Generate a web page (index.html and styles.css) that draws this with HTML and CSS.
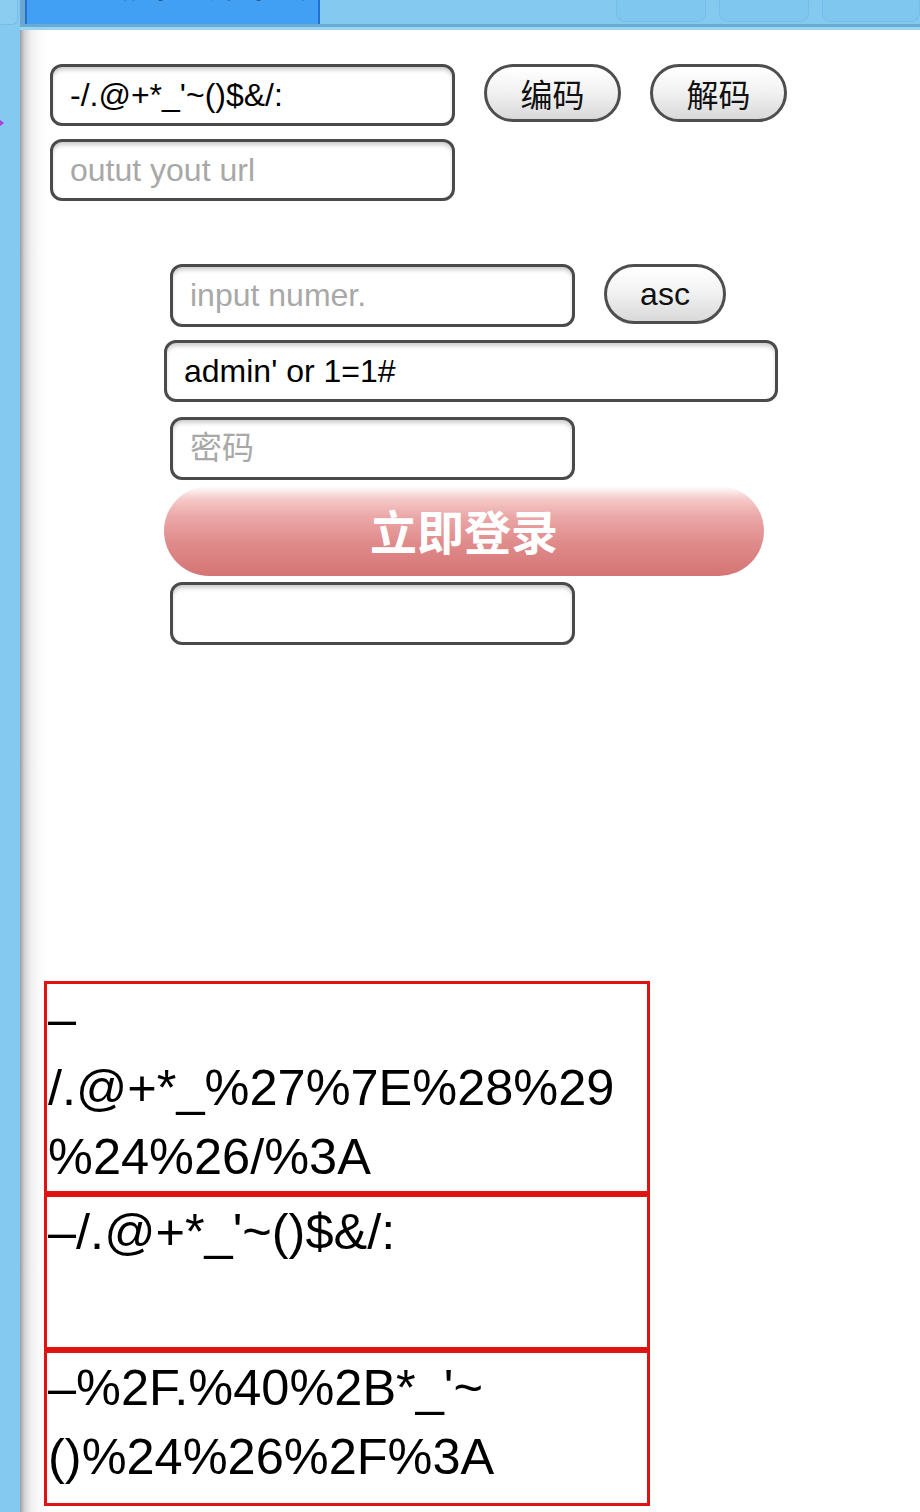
FILE: index.html
```html
<!DOCTYPE html>
<html lang="zh-CN">
<head>
<meta charset="utf-8">
<title>URL 编码 / 解码</title>
<link rel="stylesheet" href="styles.css">
</head>
<body>
<div class="app">
  <aside class="sidebar">
    <div class="sb-cap"></div>
    <div class="sb-mark"></div>
  </aside>
  <div class="main">
    <div class="tabbar">
      <div class="tab-gap"></div>
      <div class="tab active"><span class="tab-label">URL 编码 / 解码工具 ·</span></div>
      <div class="tab-spacer"></div>
      <div class="tab"></div>
      <div class="tab"></div>
      <div class="tab last"></div>
    </div>
    <div class="content">
      <section class="coder">
        <div class="row">
          <input class="field" type="text" value="-/.@+*_'~()$&amp;/:">
          <button class="pill" type="button">编码</button>
          <button class="pill" type="button">解码</button>
        </div>
        <div class="row second">
          <input class="field" type="text" placeholder="outut yout url">
        </div>
      </section>
      <section class="login">
        <div class="row narrow">
          <input class="field tall" type="text" placeholder="input numer.">
          <button class="pill asc" type="button">asc</button>
        </div>
        <input class="field tall wide" type="text" value="admin' or 1=1#">
        <input class="field tall narrow pw" type="password" placeholder="密码">
        <button class="submit" type="button">立即登录</button>
        <input class="field tall narrow last-field" type="text">
      </section>
      <section class="outputs">
        <div class="out">–<br>/.@+*_%27%7E%28%29<br>%24%26/%3A</div>
        <div class="out">–/.@+*_'~()$&amp;/:</div>
        <div class="out">–%2F.%40%2B*_'~<br>()%24%26%2F%3A</div>
      </section>
    </div>
  </div>
</div>
</body>
</html>
```
FILE: styles.css
```css
* { box-sizing: border-box; }

html, body {
  margin: 0;
  padding: 0;
}

body {
  background: #83c9f0;
  font-family: "Liberation Sans", "Noto Sans CJK SC", sans-serif;
  color: #000;
}

.app {
  display: flex;
  min-height: 1512px;
}

.sidebar {
  width: 20px;
  flex: none;
  display: flex;
  flex-direction: column;
  background: #83c9f0;
}

.sb-cap {
  width: 18px;
  height: 25px;
  background: #8acdf1;
  border-right: 1px solid #79bde4;
  border-bottom: 1px solid #79bde4;
  border-bottom-right-radius: 6px;
}

.sb-mark {
  margin-top: 95px;
  width: 0;
  height: 0;
  border-top: 3px solid transparent;
  border-bottom: 3px solid transparent;
  border-left: 4px solid #b23ad8;
}

.main {
  flex: 1;
  display: flex;
  flex-direction: column;
  min-width: 0;
}

.tabbar {
  height: 30px;
  display: flex;
  align-items: flex-start;
  background: #83c9f0;
  border-bottom: 3px solid #9ad4f3;
  box-shadow: inset 0 -3px 0 #6aabd4;
  overflow: hidden;
}

.tab-gap {
  width: 5px;
  height: 24px;
  background: #6aa6cf;
}

.tab {
  height: 22px;
  width: 92px;
  margin-right: 13px;
  border: 1px solid #74bde8;
  border-top: none;
  border-radius: 0 0 9px 9px;
  background: #80c7ef;
}

.tab.last {
  width: 100px;
  margin-right: 0;
}

.tab.active {
  width: 301px;
  height: 24px;
  margin-right: 0;
  background: #42a0f4;
  border: none;
  border-left: 2px solid #2470cf;
  border-right: 2px solid #2470cf;
  border-radius: 0;
  overflow: hidden;
  padding-left: 8px;
}

.tab-label {
  display: block;
  margin-top: -24px;
  font-size: 24px;
  line-height: 28px;
  color: #0f2340;
  white-space: nowrap;
  letter-spacing: 6px;
}

.tab-spacer {
  width: 296px;
  flex: none;
}

.content {
  flex: 1;
  background: linear-gradient(to right, #9c9c9c 0, #cfcfcf 4px, #ececec 10px, #f9f9f9 18px, #fff 26px);
  padding: 34px 0 0 30px;
}

.row {
  display: flex;
  align-items: flex-start;
  gap: 29px;
}

.row.second {
  margin-top: 13px;
}

.field {
  display: block;
  width: 405px;
  height: 62px;
  margin: 0;
  padding: 0 17px;
  border: 3px solid #4a4a4a;
  border-radius: 12px;
  background: #fff;
  box-shadow: inset 0 4px 4px -1px rgba(0, 0, 0, 0.2);
  font-family: "Liberation Sans", "Noto Sans CJK SC", sans-serif;
  font-size: 32px;
  color: #000;
  outline: none;
}

.field::placeholder {
  color: #a8a8a8;
  opacity: 1;
}

.field.tall {
  height: 63px;
}

.pill {
  width: 137px;
  height: 58px;
  margin: 0;
  padding: 0;
  border: 3px solid #4e4e4e;
  border-radius: 30px;
  background: linear-gradient(to bottom, #ffffff 0%, #f3f3f3 45%, #d9d9d9 100%);
  font-family: "Noto Sans CJK SC", "Liberation Sans", sans-serif;
  font-size: 32px;
  line-height: 1;
  color: #111;
}

.pill.asc {
  width: 122px;
  height: 60px;
  font-family: "Liberation Sans", sans-serif;
  font-size: 32px;
}

.login {
  margin-top: 63px;
  margin-left: 114px;
  display: flex;
  flex-direction: column;
  align-items: flex-start;
}

.login .narrow {
  margin-left: 6px;
}

.field.wide {
  width: 614px;
  height: 62px;
  margin-top: 13px;
}

.field.pw {
  margin-top: 15px;
}

.submit {
  width: 600px;
  height: 90px;
  margin: 6px 0 0 0;
  padding: 0 0 4px 0;
  border: none;
  border-radius: 45px;
  background: linear-gradient(to bottom, #ffffff 0%, #f6caca 14%, #eba7a7 34%, #e08c8c 62%, #d57474 100%);
  color: #fff;
  font-family: "Noto Sans CJK SC", sans-serif;
  font-weight: 700;
  font-size: 47px;
  line-height: 1;
  text-align: center;
}

.field.last-field {
  margin-top: 6px;
}

.outputs {
  margin-top: 336px;
  margin-left: -6px;
  width: 606px;
}

.out {
  border: 3px solid #e01212;
  min-height: 156px;
  font-family: "Liberation Sans", sans-serif;
  font-size: 50.5px;
  line-height: 69px;
  padding-left: 1px;
  white-space: nowrap;
}
```
